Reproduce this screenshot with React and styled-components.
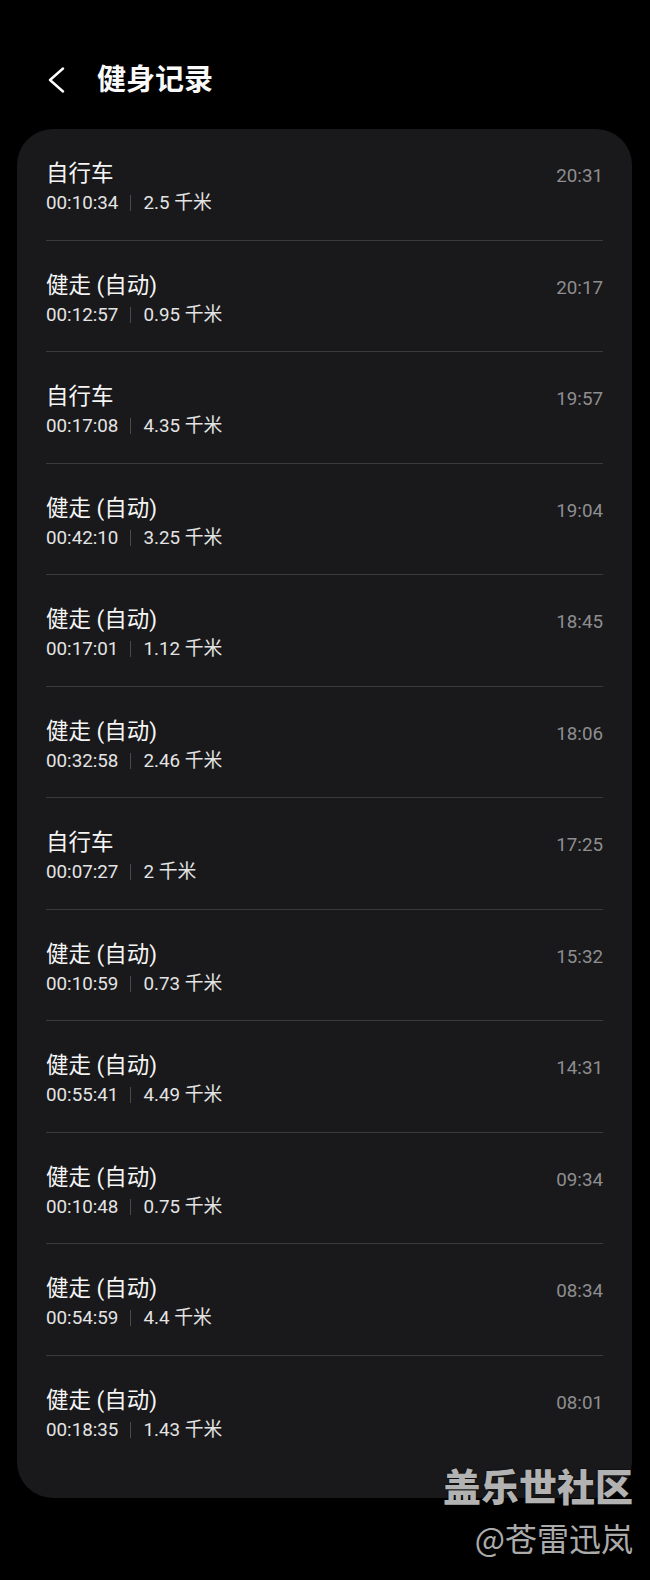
import React from "react";
import styled, { createGlobalStyle } from "styled-components";

const GlobalStyle = createGlobalStyle`
  html, body {
    margin: 0;
    padding: 0;
    background: #000;
  }
  body {
    font-family: Roboto, "Noto Sans CJK SC", sans-serif;
    -webkit-font-smoothing: antialiased;
  }
`;

const Page = styled.div`
  position: relative;
  min-height: 1580px;
  background: #000;
  overflow: hidden;
`;

const Header = styled.header`
  display: flex;
  align-items: center;
  height: 60px;
  padding: 50px 0 19px 47px;
  gap: 30px;
`;

const BackButton = styled.button`
  display: flex;
  align-items: center;
  padding: 0;
  border: 0;
  background: none;
  color: #fff;
  cursor: pointer;
`;

const Title = styled.h1`
  margin: 0;
  font-size: 29px;
  font-weight: 700;
  color: #fafafa;
  line-height: 40px;
`;

const Card = styled.section`
  margin: 0 18px 0 17px;
  padding: 0 29px 32px 29px;
  background: #19191b;
  border-radius: 36px;
`;

const Row = styled.div`
  display: flex;
  justify-content: space-between;
  align-items: flex-start;
  height: ${(p) => (p.$last ? "110.5px" : "111.5px")};
  box-sizing: border-box;
  padding-top: 29px;
  border-bottom: ${(p) => (p.$last ? "none" : "1px solid #3a3a3c")};
`;

const Info = styled.div`
  display: flex;
  flex-direction: column;
`;

const Name = styled.div`
  font-size: 22.5px;
  line-height: 30px;
  color: #f5f5f5;
`;

const Meta = styled.div`
  display: flex;
  align-items: center;
  font-size: 18.8px;
  line-height: 30px;
  color: #e4e4e4;
`;

const Sep = styled.span`
  width: 1px;
  height: 16px;
  margin: 0 12px;
  background: #4a4a4c;
`;

const Time = styled.div`
  margin-top: 3px;
  font-size: 18.8px;
  line-height: 30px;
  color: #8e8e90;
`;

const Watermark = styled.div`
  position: absolute;
  right: 17px;
  top: 1463px;
  display: flex;
  flex-direction: column;
  align-items: flex-end;
  font-family: "Noto Sans CJK SC", sans-serif;
  pointer-events: none;
`;

const MarkBrand = styled.div`
  font-size: 38px;
  line-height: 44px;
  font-weight: 900;
  color: #b2b2b2;
  text-shadow: 0 0 2px #000;
`;

const MarkUser = styled.div`
  margin-top: 10px;
  font-size: 32px;
  line-height: 40px;
  color: #ababab;
  text-shadow: 0 0 2px #000;
`;

const records = [
  { name: "自行车", dur: "00:10:34", dist: "2.5", time: "20:31" },
  { name: "健走 (自动)", dur: "00:12:57", dist: "0.95", time: "20:17" },
  { name: "自行车", dur: "00:17:08", dist: "4.35", time: "19:57" },
  { name: "健走 (自动)", dur: "00:42:10", dist: "3.25", time: "19:04" },
  { name: "健走 (自动)", dur: "00:17:01", dist: "1.12", time: "18:45" },
  { name: "健走 (自动)", dur: "00:32:58", dist: "2.46", time: "18:06" },
  { name: "自行车", dur: "00:07:27", dist: "2", time: "17:25" },
  { name: "健走 (自动)", dur: "00:10:59", dist: "0.73", time: "15:32" },
  { name: "健走 (自动)", dur: "00:55:41", dist: "4.49", time: "14:31" },
  { name: "健走 (自动)", dur: "00:10:48", dist: "0.75", time: "09:34" },
  { name: "健走 (自动)", dur: "00:54:59", dist: "4.4", time: "08:34" },
  { name: "健走 (自动)", dur: "00:18:35", dist: "1.43", time: "08:01" },
];

function BackIcon() {
  return (
    <svg width="20" height="26" viewBox="0 0 20 26" fill="none">
      <polyline
        points="16,1.5 3,13 16,24.5"
        stroke="#fff"
        strokeWidth="2.4"
        strokeLinecap="round"
        strokeLinejoin="round"
      />
    </svg>
  );
}

export default function App() {
  return (
    <Page>
      <GlobalStyle />
      <Header>
        <BackButton aria-label="返回">
          <BackIcon />
        </BackButton>
        <Title>健身记录</Title>
      </Header>
      <Card>
        {records.map((r, i) => (
          <Row key={i} $last={i === records.length - 1}>
            <Info>
              <Name>{r.name}</Name>
              <Meta>
                {r.dur}
                <Sep />
                {r.dist} 千米
              </Meta>
            </Info>
            <Time>{r.time}</Time>
          </Row>
        ))}
      </Card>
      <Watermark>
        <MarkBrand>盖乐世社区</MarkBrand>
        <MarkUser>@苍雷迅岚</MarkUser>
      </Watermark>
    </Page>
  );
}
